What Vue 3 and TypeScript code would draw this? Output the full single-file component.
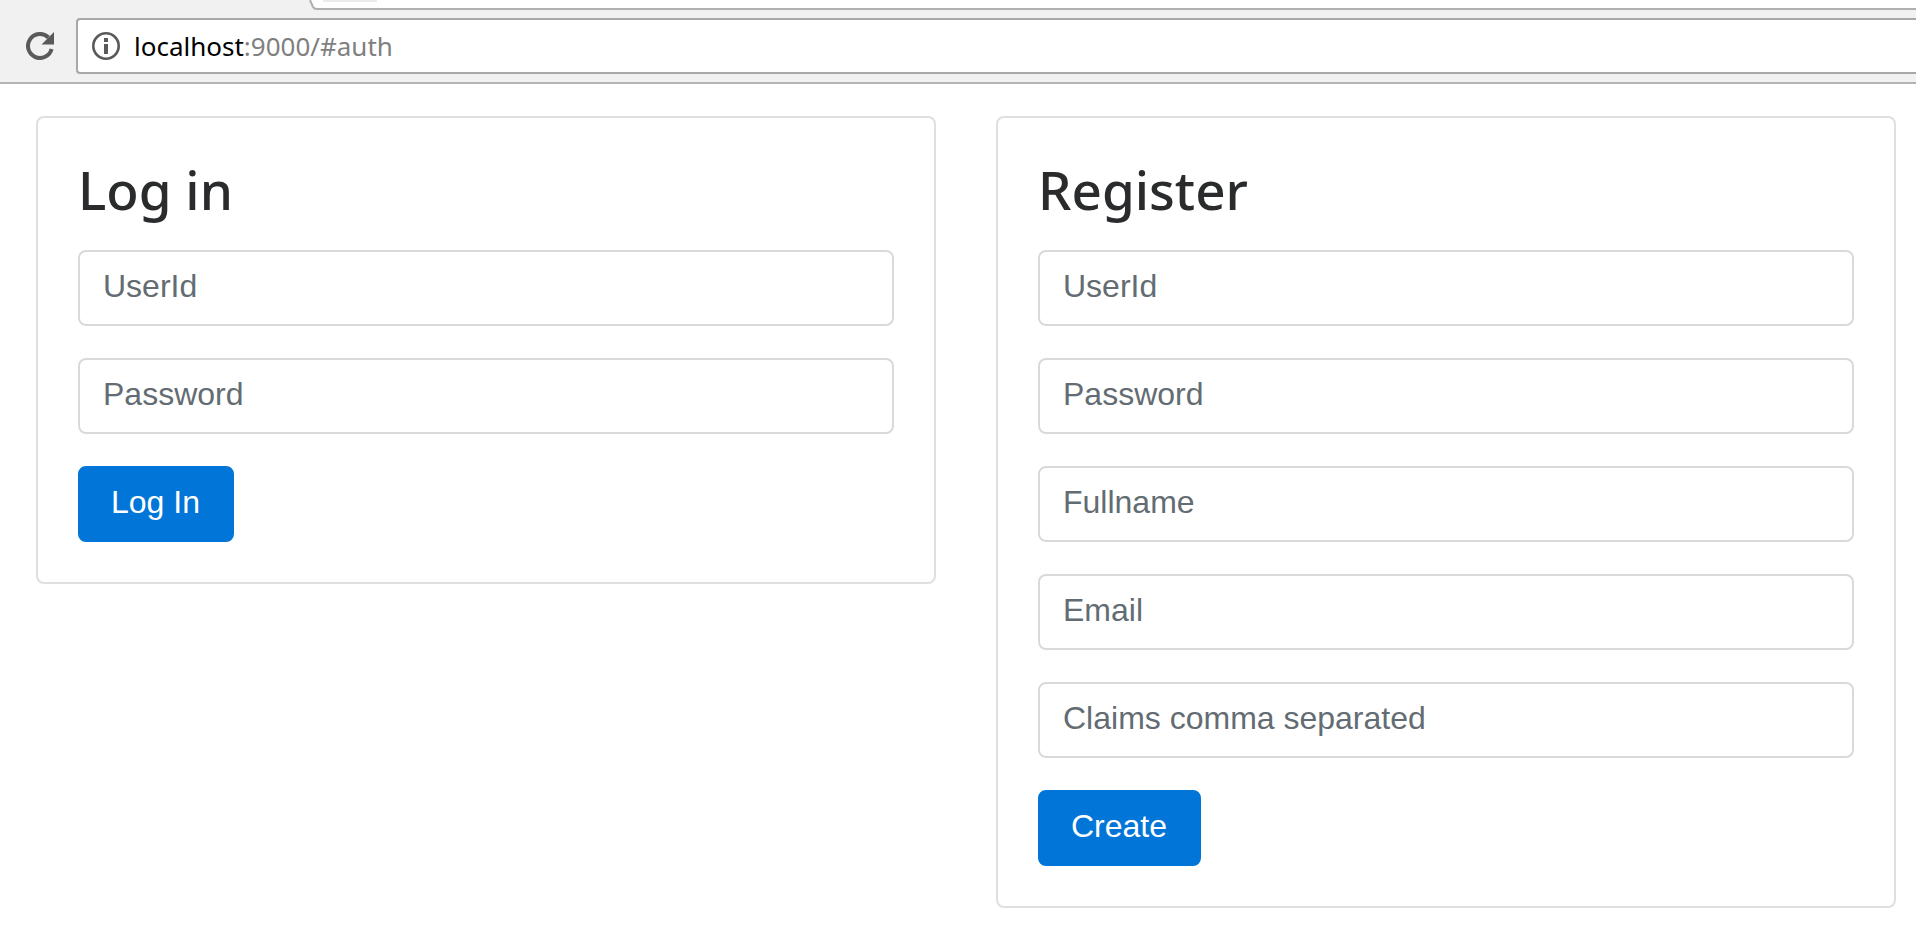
<script setup lang="ts">
import { reactive, ref } from 'vue'

interface Field {
  id: string
  label: string
  type: 'text' | 'password' | 'email'
}

interface AuthForm {
  id: string
  title: string
  action: string
  fields: Field[]
}

const forms: AuthForm[] = [
  {
    id: 'login',
    title: 'Log in',
    action: 'Log In',
    fields: [
      { id: 'login-user', label: 'UserId', type: 'text' },
      { id: 'login-password', label: 'Password', type: 'password' },
    ],
  },
  {
    id: 'register',
    title: 'Register',
    action: 'Create',
    fields: [
      { id: 'register-user', label: 'UserId', type: 'text' },
      { id: 'register-password', label: 'Password', type: 'password' },
      { id: 'register-fullname', label: 'Fullname', type: 'text' },
      { id: 'register-email', label: 'Email', type: 'email' },
      { id: 'register-claims', label: 'Claims comma separated', type: 'text' },
    ],
  },
]

const values = reactive<Record<string, string>>({})
const host = ref('localhost')
const path = ref(':9000/#auth')
</script>

<template>
  <div class="page">
    <header class="browser">
      <div class="tabs">
        <svg class="tab-edge" viewBox="0 0 14 10" aria-hidden="true">
          <path class="tab-fill" d="M2 0 L5 7 Q6 9 8 9 H14 V0 Z" />
          <path class="tab-line" d="M1 0 L4 7 Q5 9 8 9 H14" />
        </svg>
        <div class="tab-strip"><span class="tab-mark"></span></div>
      </div>
      <div class="toolbar">
        <button class="icon-button" type="button" aria-label="Reload">
          <svg class="icon" viewBox="0 0 28 28" aria-hidden="true">
            <path class="ring" d="M22.5 5.5 A12 12 0 1 0 25.6 17" />
            <path class="solid" d="M28 0 V12.5 H15.5 Z" />
          </svg>
        </button>
        <div class="address">
          <svg class="icon" viewBox="0 0 28 28" aria-hidden="true">
            <circle class="thin-ring" cx="14" cy="14" r="12.7" />
            <path class="solid" d="M12 6 h4 v4 h-4 z M12 12 h4 v10 h-4 z" />
          </svg>
          <a class="url" href="#auth"><span class="host">{{ host }}</span>{{ path }}</a>
        </div>
      </div>
    </header>

    <main class="columns">
      <form v-for="form in forms" :key="form.id" class="card" @submit.prevent>
        <h1 class="title">{{ form.title }}</h1>
        <input
          v-for="field in form.fields"
          :id="field.id"
          :key="field.id"
          v-model="values[field.id]"
          class="field"
          :type="field.type"
          :placeholder="field.label"
          :aria-label="field.label"
        />
        <button class="submit" type="submit">{{ form.action }}</button>
      </form>
    </main>
  </div>
</template>

<style>
body {
  margin: 0;
  background: #fff;
}
</style>

<style scoped>
.page {
  font-family: "Liberation Sans", Arial, sans-serif;
  color: #292b2c;
}

.browser {
  background: #f1f1f1;
  border-bottom: 2px solid #b3b3b3;
}

.tabs {
  display: flex;
  height: 10px;
  padding-left: 309px;
}

.tab-edge {
  width: 14px;
  height: 10px;
}

.tab-fill {
  fill: #fff;
}

.tab-line {
  fill: none;
  stroke: #b0b0b0;
  stroke-width: 2;
}

.tab-strip {
  flex: 1;
  box-sizing: border-box;
  background: #fff;
  border-bottom: 2px solid #b0b0b0;
}

.tab-mark {
  display: block;
  width: 54px;
  height: 2px;
  background: #ebebeb;
}

.toolbar {
  display: flex;
  align-items: center;
  gap: 22px;
  padding: 8px 0 8px 26px;
}

.icon-button {
  display: flex;
  padding: 0;
  border: 0;
  background: none;
}

.icon {
  display: block;
  width: 28px;
  height: 28px;
}

.ring {
  fill: none;
  stroke: #5a5a5a;
  stroke-width: 4;
}

.thin-ring {
  fill: none;
  stroke: #5a5a5a;
  stroke-width: 2.6;
}

.solid {
  fill: #5a5a5a;
}

.address {
  display: flex;
  flex: 1;
  align-items: center;
  gap: 14px;
  height: 52px;
  padding-left: 14px;
  background: #fff;
  border: 2px solid #a8a8a8;
  border-right: 0;
  border-radius: 4px 0 0 4px;
}

.url {
  font-family: "Noto Sans", "Open Sans", sans-serif;
  font-size: 26px;
  line-height: 36px;
  color: #808080;
  text-decoration: none;
}

.host {
  color: #000;
}

.columns {
  display: grid;
  grid-template-columns: 1fr 1fr;
  align-items: start;
  gap: 60px;
  padding: 32px 20px 32px 36px;
}

.card {
  display: flex;
  flex-direction: column;
  align-items: flex-start;
  gap: 32px;
  padding: 40px;
  border: 2px solid #dfdfdf;
  border-radius: 8px;
}

.title {
  margin: 0 0 -4px;
  font-family: "Noto Sans", "Open Sans", sans-serif;
  font-size: 53px;
  font-weight: 500;
  line-height: 64px;
}

.field {
  box-sizing: border-box;
  width: 100%;
  height: 76px;
  padding: 14px 23px 18px;
  border: 2px solid #d9d9d9;
  border-radius: 8px;
  background: #fff;
  color: #464a4c;
  font: 32px/40px "Liberation Sans", Arial, sans-serif;
}

.field::placeholder {
  color: #636c72;
  opacity: 1;
}

.submit {
  padding: 16px 32px 20px 31px;
  border: 2px solid #0275d8;
  border-radius: 8px;
  background: #0275d8;
  color: #fff;
  font: 32px/36px "Liberation Sans", Arial, sans-serif;
}
</style>
